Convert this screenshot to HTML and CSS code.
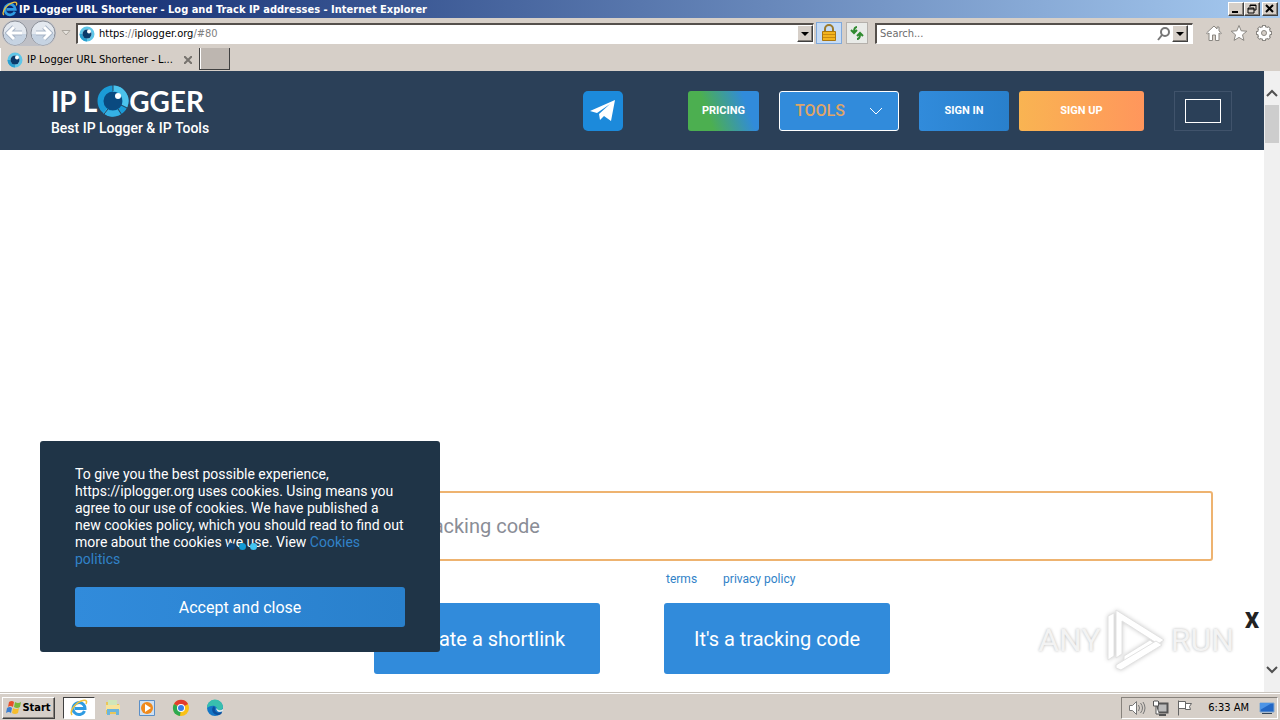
FILE: index.html
```
<!DOCTYPE html>
<html lang="en">
<head>
    <meta charset="UTF-8">
    <meta name="viewport" content="width=device-width, initial-scale=1.0">
    <title>IP Logger URL Shortener - Log and Track IP addresses</title>
    <link rel="stylesheet" href="styles.css">
</head>
<body>
    <!-- shared icons -->
    <svg class="defs" width="0" height="0" aria-hidden="true">
        <symbol id="eye" viewBox="0 0 32 32">
            <circle cx="16" cy="16" r="10" fill="#0a4a80"/>
            <circle cx="16" cy="16" r="12.500" fill="none" stroke="#1b9bd7" stroke-width="6"/>
            <path d="M16 3.500a12.500 12.500 0 0 1 11.500 17.500" fill="none" stroke="#4cc3ec" stroke-width="6"/>
            <path d="M22 27A12.500 12.500 0 0 1 8 26" fill="none" stroke="#35b1e4" stroke-width="6"/>
            <path d="M16 0v6M24 20l6 3M21 24l4 6M11 24l-4 5" stroke="#2b4058" stroke-width="1"/>
            <circle cx="21" cy="11" r="3" fill="#fff"/>
        </symbol>
        <symbol id="eye-small" viewBox="0 0 16 16">
            <circle cx="8" cy="8" r="6" fill="#fff" stroke="#5fc6e8" stroke-width="3"/>
            <path d="M2 8a6 6 0 0 0 6 6" fill="none" stroke="#2a9fd0" stroke-width="3"/>
            <circle cx="8" cy="8" r="4.500" fill="#0b3a6b"/>
            <circle cx="10" cy="5.500" r="2" fill="#fff"/>
        </symbol>
        <symbol id="ie" viewBox="0 0 18 18">
            <path d="M14.500 12A6 6 0 1 1 15 9.500H5" fill="none" stroke="#2f9be2" stroke-width="3"/>
            <path d="M2 16C-1 12 6 3 13 1.500c4-.8 4 1.500 3 3.500" fill="none" stroke="#f0c23c" stroke-width="1.500"/>
        </symbol>
    </svg>

    <header class="title-bar">
        <svg class="icon-16"><use href="#ie"/></svg>
        <span class="window-title">IP Logger URL Shortener - Log and Track IP addresses - Internet Explorer</span>
        <div class="window-buttons">
            <button aria-label="Minimize"><svg width="12" height="10"><path d="M2 8h6" stroke="#000" stroke-width="2"/></svg></button>
            <button aria-label="Restore"><svg width="12" height="10"><path d="M4 3V1h6v5H8M4 1.500h6M2 4h6v5H2zM2 5h6" fill="none" stroke="#000"/></svg></button>
            <button class="close" aria-label="Close"><svg width="12" height="10"><path d="M2 1l7 7M9 1l-7 7" stroke="#000" stroke-width="2"/></svg></button>
        </div>
    </header>

    <div class="nav-bar">
        <div class="history">
            <button aria-label="Back"><svg viewBox="0 0 26 26"><circle cx="13" cy="13" r="12" fill="#e3e8ef" stroke="#8b8f98"/><path d="M2 14a11 11 0 0 0 22 0z" fill="#c6d3e2"/><path d="M12 7l-6 6 6 6M7 13h13" fill="none" stroke="#a7b4c6" stroke-width="5"/><path d="M12 7l-6 6 6 6M7 13h13" fill="none" stroke="#fff" stroke-width="3"/></svg></button>
            <button aria-label="Forward"><svg viewBox="0 0 26 26"><circle cx="13" cy="13" r="12" fill="#e3e8ef" stroke="#8b8f98"/><path d="M2 14a11 11 0 0 0 22 0z" fill="#c6d3e2"/><path d="M14 7l6 6-6 6M19 13H6" fill="none" stroke="#a7b4c6" stroke-width="5"/><path d="M14 7l6 6-6 6M19 13H6" fill="none" stroke="#fff" stroke-width="3"/></svg></button>
        </div>
        <svg class="recent" width="10" height="6"><path d="M1 .5h8L5 5z" fill="#e6e3de" stroke="#aaa59e"/></svg>
        <div class="field address">
            <svg class="icon-16"><use href="#eye-small"/></svg>
            <a href="#80">https<i>://</i>iplogger.org<i>/#80</i></a>
            <button class="drop" aria-label="Show address list"><svg width="8" height="4"><path d="M0 0h8L4 4z"/></svg></button>
        </div>
        <button class="tool lock" aria-label="Security report"><svg width="16" height="18"><path d="M4 8V5a4 4 0 0 1 8 0v3" fill="none" stroke="#9b7a2c" stroke-width="2"/><path d="M1.500 7.500h13v9h-13z" fill="#f3b41e" stroke="#a97611"/><path d="M2 10.500h12M2 13.500h12" stroke="#c98a10"/></svg></button>
        <button class="tool" aria-label="Refresh"><svg width="16" height="16" fill="none" stroke="#2f8a2f" stroke-width="2"><path d="M8 2C6 2 5 3 5 7M2 5l3 3 3-3M8 14c2 0 3-1 3-5M8 11l3-3 3 3"/></svg></button>
        <div class="field search">
            <input type="text" aria-label="Search" placeholder="Search...">
            <svg width="14" height="14" fill="none" stroke="#777"><circle cx="8" cy="5" r="4" stroke-width="2"/><path d="M5 8l-4 5" stroke-width="2"/></svg>
            <button class="drop" aria-label="Search options"><svg width="8" height="4"><path d="M0 0h8L4 4z"/></svg></button>
        </div>
        <div class="browser-tools">
            <button aria-label="Home"><svg viewBox="0 0 18 18"><path d="M1.500 9L9 2l3 3V3h2v4l2.500 2-1 1L14 9v7.500h-3.500V11h-3v5.500H4V9l-1.500 1z" fill="#fff" stroke="#8a8782"/></svg></button>
            <button aria-label="Favorites"><svg viewBox="0 0 18 18"><path d="M9 1.500l2.200 5.300 5.600.4-4.300 3.600 1.400 5.600L9 13.400l-4.900 3 1.400-5.600L1.200 7.200l5.600-.4z" fill="#fff" stroke="#8a8782"/></svg></button>
            <button aria-label="Tools"><svg viewBox="0 0 18 18" fill="none"><path d="M9 1v16M1 9h16M3.300 3.300l11.400 11.400M14.700 3.300L3.300 14.700" stroke="#8a8782" stroke-width="4"/><circle cx="9" cy="9" r="4.500" stroke="#8a8782" stroke-width="5"/><path d="M9 2v14M2 9h14M4 4l10 10M14 4L4 14" stroke="#fff" stroke-width="2"/><circle cx="9" cy="9" r="4.500" stroke="#fff" stroke-width="3"/><circle cx="9" cy="9" r="2.500" fill="#d6cfc8" stroke="#8a8782"/></svg></button>
        </div>
    </div>

    <div class="tab-bar">
        <div class="tab">
            <svg class="icon-16"><use href="#eye-small"/></svg>
            <span>IP Logger URL Shortener - L...</span>
            <button aria-label="Close tab"><svg width="8" height="8"><path d="M0 0l8 8M8 0L0 8" stroke="#77736e" stroke-width="2"/></svg></button>
        </div>
        <button class="new-tab" aria-label="New tab"></button>
    </div>

    <div class="viewport">
        <div class="page">
            <div class="header">
                <a class="logo" href="#">
                    <span class="logo-name">IP L<svg><use href="#eye"/></svg>GGER</span>
                    <span class="logo-text">Best IP Logger &amp; IP Tools</span>
                </a>
                <a class="telegram" href="#" aria-label="Telegram"><svg width="26" height="22"><path d="M0 11L25 0l-4 21-7-5-4 4-1-6L20 4 7 13z" fill="#fff"/></svg></a>
                <a class="btn pricing" href="#">PRICING</a>
                <button class="btn tools">TOOLS <svg width="14" height="8"><path d="M1 1l6 6 6-6" fill="none" stroke="#fff"/></svg></button>
                <a class="btn sign-in" href="#">SIGN IN</a>
                <a class="btn sign-up" href="#">SIGN UP</a>
                <button class="lang" aria-label="Language"><span></span></button>
            </div>
            <div class="ad-slot"></div>
            <form class="create">
                <input type="text" aria-label="Link or tracking code" placeholder="Enter a URL, shortlink, IP address or a tracking code">
                <div class="links">
                    <a href="#">terms</a>
                    <a href="#">privacy policy</a>
                </div>
                <div class="actions">
                    <button type="button">Create a shortlink</button>
                    <button type="button">It's a tracking code</button>
                </div>
            </form>

            <div class="cookies">
                <p>To give you the best possible experience, https://iplogger.org uses cookies. Using means you agree to our use of cookies. We have published a new cookies policy, which you should read to find out more about the cookies we use. View <a href="#">Cookies politics</a></p>
                <button>Accept and close</button>
                <div class="loader"><i></i><i></i><i></i></div>
            </div>

            <div class="watermark">
                <span>ANY</span>
                <svg width="60" height="64" fill="#fff" stroke="#e2e2e2"><path d="M10 2l48 30-6 4L16 13v33l-6 4z"/><path d="M2 8l6-3v43l-6 4z"/><path d="M18 48l26-16 5 4-31 19z"/><path d="M10 57l40-24 6 4-41 25-5-2z"/></svg>
                <span>RUN</span>
            </div>
            <button class="ad-close" aria-label="Close ad">X</button>
        </div>
        <div class="scrollbar">
            <svg width="12" height="8"><path d="M1 7l5-5 5 5" fill="none" stroke="#505050" stroke-width="2"/></svg>
            <div class="thumb"></div>
            <svg width="12" height="8"><path d="M1 1l5 5 5-5" fill="none" stroke="#505050" stroke-width="2"/></svg>
        </div>
    </div>

    <footer class="taskbar">
        <button class="start">
            <svg width="16" height="16"><path d="M3 2q3-2 5 0L7 7Q4 5 2 7z" fill="#e8502a"/><path d="M9 2q3 2 6 0l-1 5q-3 2-6 0z" fill="#79b83a"/><path d="M1 8q3-2 5 0l-1 5q-2-2-5 0z" fill="#3c7fd0"/><path d="M7 8q3 2 6 0l-1 5q-3 2-6 0z" fill="#f6bd2c"/></svg>
            Start
        </button>
        <button class="task active" aria-label="Internet Explorer"><svg viewBox="0 0 18 18"><use href="#ie"/></svg></button>
        <button class="task" aria-label="Explorer"><svg viewBox="0 0 18 18"><path d="M2 3h5l1 2h7v10H2z" fill="#e9c65a"/><path d="M4 1h9v5H4z" fill="#cfe6b8"/><path d="M2 6h14v5H2z" fill="#f7e39a"/><path d="M3 16v-6h12v6h-3v-3H6v3z" fill="#6bb5dc"/></svg></button>
        <button class="task" aria-label="Media Player"><svg viewBox="0 0 18 18"><path d="M1.500 1.500h15v15h-15z" fill="#cfe0f2" stroke="#5b8fc7"/><circle cx="9" cy="9" r="6" fill="#f08a1c"/><path d="M7 5l6 4-6 4z" fill="#fff"/></svg></button>
        <button class="task" aria-label="Chrome"><svg viewBox="0 0 18 18"><circle cx="9" cy="9" r="8" fill="#fbc116"/><path d="M9 9L2 5a8 8 0 0 1 14 0z" fill="#e33b2e"/><path d="M9 9L2 5a8 8 0 0 0 6 12z" fill="#2da94f"/><circle cx="9" cy="9" r="4" fill="#fff"/><circle cx="9" cy="9" r="3" fill="#3a7de8"/></svg></button>
        <button class="task" aria-label="Edge"><svg viewBox="0 0 18 18"><circle cx="9" cy="9" r="8" fill="#1476c6"/><path d="M1 9a8 8 0 0 1 16-1c0 3-3 4-6 3 1-4-5-6-10-2z" fill="#38bfae"/><path d="M8 7c-4 3-1 9 4 9 3 0 4-2 4-3-4 2-8 0-7-4z" fill="#0d4f9c"/><path d="M10 9q3 4 7 1v2q-6 3-7-3z" fill="#e2ebee"/></svg></button>
        <div class="tray">
            <svg width="18" height="16" fill="none" stroke="#777"><path d="M1.500 5.500h3l4-4v13l-4-4h-3z" fill="#fff"/><path d="M10.500 5q2 3 0 6M12.500 3q4 5 0 10M15 2q4 6 0 12"/></svg>
            <svg width="18" height="16" fill="none" stroke="#555"><path d="M5.500 3.500h10v9h-10z" fill="#bbb" stroke-width="2"/><path d="M7 15h7" stroke-width="2"/><path d="M1.500 1v5h5V1M4 6v8h3M3 0v2M5 0v2" fill="#fff"/></svg>
            <svg width="18" height="16" fill="#fff" stroke="#666"><path d="M2.500 15.500v-15M2.500 1.500h7v7h-7M9.500 3.500h6l-2 3 1 3h-5z"/></svg>
            <time>6:33 AM</time>
            <svg class="desktop" width="16" height="14"><path d="M1 2h14v9H1z" fill="#2267c5" stroke="#7fa6d0"/><path d="M1 9L13 2H1z" fill="#4c94e6"/><path d="M3 12.500h10" stroke="#345"/></svg>
        </div>
    </footer>
</body>
</html>
```
FILE: styles.css
```
* {
    box-sizing: border-box;
}
body {
    margin: 0;
    min-height: 100vh;
    display: flex;
    flex-direction: column;
    background-color: #d6cfc8;
    font-family: "DejaVu Sans Condensed", "DejaVu Sans", sans-serif;
    font-size: 11px;
    color: #000;
}
button, input {
    font: inherit;
    margin: 0;
    padding: 0;
    border: none;
    background: none;
}
button {
    display: flex;
    align-items: center;
    justify-content: center;
    cursor: pointer;
}
a {
    text-decoration: none;
}
svg {
    display: block;
    flex: none;
}
.defs {
    position: absolute;
}
.icon-16 {
    width: 16px;
    height: 16px;
}

/* browser window */
.title-bar {
    display: flex;
    align-items: center;
    gap: 1px;
    height: 18px;
    padding: 0 2px;
    background: linear-gradient(to right, #0a246a, #a6caf0);
    color: #fff;
}
.window-title {
    flex: 1;
    font-weight: bold;
    white-space: nowrap;
}
.window-buttons {
    display: flex;
}
.window-buttons button, .drop, .start {
    background-color: #d6cfc8;
    border: 1px solid;
    border-color: #fff #404040 #404040 #fff;
    box-shadow: inset -1px -1px #87827c;
}
.window-buttons button {
    width: 16px;
    height: 14px;
}
.window-buttons .close {
    margin-left: 2px;
}
.nav-bar {
    display: flex;
    align-items: center;
    height: 30px;
    padding: 0 7px 0 2px;
}
.history {
    display: flex;
    gap: 2px;
    border-radius: 13px;
    background-color: #bfc0c6;
}
.history svg {
    width: 26px;
    height: 26px;
}
.recent {
    margin: 0 5px;
}
.field {
    display: flex;
    align-items: center;
    height: 21px;
    padding-left: 1px;
    background-color: #fff;
    border: 1px solid #fff;
    border-top: 2px solid #55504c;
    border-left: 2px solid #55504c;
}
.address {
    flex: 1;
    gap: 4px;
}
.address a {
    flex: 1;
    color: #000;
}
.address i {
    font-style: normal;
    color: #808080;
}
.drop {
    width: 16px;
    height: 17px;
}
.tool {
    width: 22px;
    height: 22px;
    margin-left: 4px;
    border: 1px solid #b5b1ac;
    background-color: #e9ebe8;
}
.tool.lock {
    width: 26px;
    margin-left: 2px;
    border-color: #7fa9dc;
    background-color: #c7dcf5;
}
.search {
    width: 318px;
    margin-left: 7px;
    padding-right: 4px;
}
.search input {
    flex: 1;
    min-width: 0;
    padding-left: 2px;
}
.search input::placeholder {
    color: #6d6d6d;
}
.search .drop {
    margin-left: 1px;
}
.browser-tools {
    display: flex;
    gap: 7px;
    margin-left: 12px;
}
.browser-tools svg {
    width: 18px;
    height: 18px;
}
.tab-bar {
    display: flex;
    height: 23px;
}
.tab {
    display: flex;
    align-items: center;
    gap: 4px;
    width: 199px;
    padding: 0 7px 0 6px;
    border-left: 1px solid #fff;
}
.tab span {
    flex: 1;
    white-space: nowrap;
}
.new-tab {
    width: 31px;
    height: 22px;
    background-color: #bdb6b0;
    border: 1px solid #404040;
    border-top: none;
    box-shadow: inset 1px 0 #fff;
}

/* page */
.viewport {
    flex: 1;
    display: flex;
    background-color: #fff;
}
.page {
    flex: 1;
    min-width: 0;
    position: relative;
    padding-bottom: 18px;
    font-family: Roboto, sans-serif;
}
.header {
    display: flex;
    align-items: center;
    height: 79px;
    padding: 0 32px 0 51px;
    background-color: #2b4058;
}
.logo {
    margin-right: auto;
    color: #fff;
}
.logo-name {
    display: flex;
    align-items: center;
    height: 34px;
    padding-top: 2px;
    font: bold 28px Lato, sans-serif;
    white-space: pre;
}
.logo-name svg {
    width: 32px;
    height: 32px;
}
.logo-text {
    display: block;
    font-size: 14px;
    line-height: 22px;
    font-weight: 500;
}
.telegram {
    display: flex;
    align-items: center;
    justify-content: center;
    width: 40px;
    height: 40px;
    margin-right: 65px;
    border-radius: 5px;
    background-color: #1c8adb;
}
.btn {
    display: flex;
    align-items: center;
    justify-content: center;
    height: 40px;
    border-radius: 3px;
    color: #fff;
    font-size: 11px;
    font-weight: bold;
}
.pricing {
    width: 71px;
    background: linear-gradient(70deg, #4caf50 30%, #318bdb 80%);
}
.tools {
    width: 120px;
    margin: 0 20px;
    padding: 0 15px;
    justify-content: space-between;
    background-color: #318bdb;
    border: 1px solid #fff;
    color: #dfa568;
    font-size: 16px;
    font-weight: 500;
}
.sign-in {
    width: 90px;
    background: linear-gradient(to right, #318bdb, #2980cc);
}
.sign-up {
    width: 125px;
    margin: 0 30px 0 10px;
    background: linear-gradient(to right, #f9b452, #ff965c);
}
.lang {
    width: 58px;
    height: 40px;
    border: 1px solid #40536b;
}
.lang span {
    width: 36px;
    height: 24px;
    border: 1px solid #fff;
}
.ad-slot {
    height: 341px;
}
.create {
    padding: 0 51px;
}
.create input {
    width: 100%;
    height: 70px;
    padding: 0 30px;
    border: 2px solid #eeb370;
    border-radius: 3px;
    background-color: #fff;
    font-size: 20px;
}
.create input::placeholder {
    color: #8a8d96;
}
.links {
    display: flex;
    gap: 26px;
    padding-left: calc(50% + 34px);
    font-size: 12px;
    line-height: 36px;
}
.links a, .cookies a {
    color: #3182c8;
}
.actions {
    display: flex;
    justify-content: center;
    gap: 64px;
    margin-top: 6px;
}
.actions button {
    width: 226px;
    height: 71px;
    border-radius: 3px;
    background-color: #318bdb;
    color: #fff;
    font-size: 20px;
}

/* things lying over the page */
.cookies {
    position: absolute;
    left: 40px;
    bottom: 40px;
    width: 400px;
    padding: 25px 35px;
    border-radius: 3px;
    background-color: #1f3447;
    color: #fff;
    font-size: 14px;
    line-height: 17px;
}
.cookies p {
    margin: 0 0 19px;
}
.cookies button {
    width: 100%;
    height: 40px;
    border-radius: 3px;
    background: linear-gradient(to right, #318bdb, #2980cc);
    color: #fff;
    font-size: 16px;
}
.loader {
    position: absolute;
    left: 188px;
    top: 102px;
    display: flex;
    gap: 4px;
}
.loader i {
    width: 7px;
    height: 7px;
    border-radius: 50%;
    background-color: #0f3f6f;
}
.loader i:nth-child(2) {
    background-color: #129ad6;
}
.loader i:nth-child(3) {
    background-color: #42c4f0;
}
.watermark {
    position: absolute;
    right: 30px;
    bottom: 20px;
    display: flex;
    align-items: center;
    gap: 5px;
    color: #f3f3f3;
    font: 32px "Liberation Sans Narrow", Roboto, sans-serif;
    text-shadow: 0 0 3px #b8b8b8;
}
.watermark svg {
    filter: drop-shadow(0 0 2px #ccc);
}
.ad-close {
    position: absolute;
    right: 5px;
    bottom: 59px;
    color: #222;
    font-size: 22px;
    font-weight: 900;
}
.scrollbar {
    display: flex;
    flex-direction: column;
    align-items: center;
    width: 16px;
    padding: 18px 0;
    background-color: #f0f0f0;
}
.thumb {
    width: 14px;
    height: 38px;
    margin: 8px 0 auto;
    background-color: #cdcdcd;
}

/* taskbar */
.taskbar {
    display: flex;
    align-items: center;
    height: 28px;
    padding: 2px 2px 0;
    background-color: #d6cfc8;
    border-top: 1px solid #c9c4bd;
    box-shadow: inset 0 1px #fff;
}
.start {
    width: 53px;
    height: 22px;
    margin-right: 8px;
    font-weight: bold;
}
.task {
    width: 32px;
    height: 22px;
    margin-right: 2px;
}
.task svg {
    width: 18px;
    height: 18px;
}
.task.active {
    background-color: #fff;
    border: 1px solid;
    border-color: #404040 #fff #fff #404040;
}
.tray {
    display: flex;
    align-items: center;
    gap: 6px;
    height: 22px;
    margin-left: auto;
    padding: 0 2px 0 6px;
    border: 1px solid;
    border-color: #87827c #fff #fff #87827c;
}
.tray time {
    margin: 0 4px 0 8px;
}
```
